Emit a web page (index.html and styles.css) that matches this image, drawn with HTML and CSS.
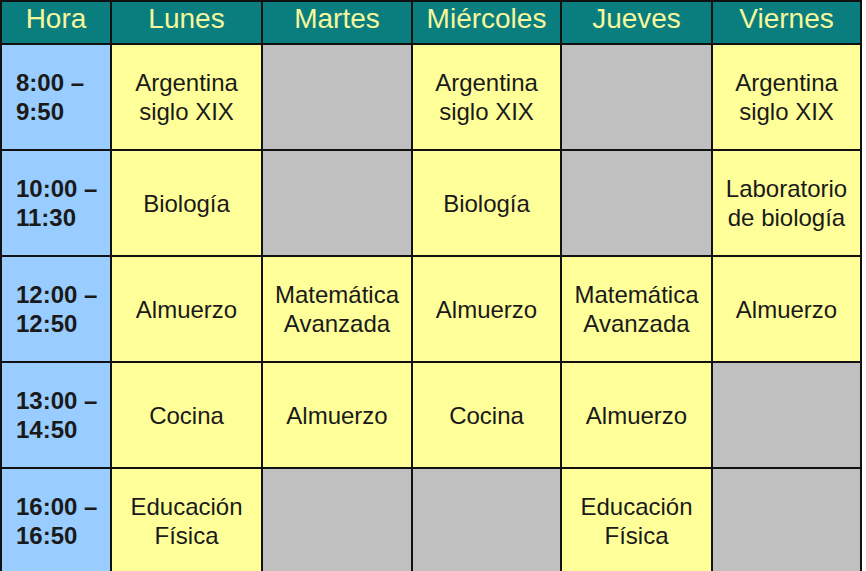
FILE: index.html
```html
<!DOCTYPE html>
<html lang="es">
<head>
<meta charset="utf-8">
<title>Horario</title>
<link rel="stylesheet" href="styles.css">
</head>
<body>
<div class="schedule">
  <div class="head">Hora</div>
  <div class="head">Lunes</div>
  <div class="head">Martes</div>
  <div class="head">Miércoles</div>
  <div class="head">Jueves</div>
  <div class="head">Viernes</div>

  <div class="time">8:00 –<br>9:50</div>
  <div class="cls">Argentina<br>siglo XIX</div>
  <div class="free"></div>
  <div class="cls">Argentina<br>siglo XIX</div>
  <div class="free"></div>
  <div class="cls">Argentina<br>siglo XIX</div>

  <div class="time">10:00 –<br>11:30</div>
  <div class="cls">Biología</div>
  <div class="free"></div>
  <div class="cls">Biología</div>
  <div class="free"></div>
  <div class="cls">Laboratorio<br>de biología</div>

  <div class="time">12:00 –<br>12:50</div>
  <div class="cls">Almuerzo</div>
  <div class="cls">Matemática<br>Avanzada</div>
  <div class="cls">Almuerzo</div>
  <div class="cls">Matemática<br>Avanzada</div>
  <div class="cls">Almuerzo</div>

  <div class="time">13:00 –<br>14:50</div>
  <div class="cls">Cocina</div>
  <div class="cls">Almuerzo</div>
  <div class="cls">Cocina</div>
  <div class="cls">Almuerzo</div>
  <div class="free"></div>

  <div class="time">16:00 –<br>16:50</div>
  <div class="cls">Educación<br>Física</div>
  <div class="free"></div>
  <div class="free"></div>
  <div class="cls">Educación<br>Física</div>
  <div class="free"></div>
</div>
</body>
</html>
```

FILE: styles.css
```css
html, body {
  margin: 0;
  padding: 0;
  background: #ffffff;
}

body {
  font-family: "Liberation Sans", Arial, sans-serif;
}

.schedule {
  display: grid;
  width: 862px;
  box-sizing: border-box;
  grid-template-columns: 108px 149px 148px 147px 149px 147px;
  grid-template-rows: 41px repeat(5, 104px);
  gap: 2px;
  padding: 2px;
  background: #111111;
}

.head {
  background: #0a7e7e;
  color: #f6f79c;
  font-size: 28px;
  line-height: 31px;
  text-align: center;
  padding-top: 1px;
}

.time,
.cls,
.free {
  display: flex;
  align-items: center;
  font-size: 24px;
  line-height: 29px;
  color: #1a1a1a;
}

.time {
  background: #99ccff;
  font-weight: bold;
  padding-left: 14px;
}

.cls {
  background: #ffff99;
  justify-content: center;
  text-align: center;
}

.free {
  background: #c0c0c0;
}
```
